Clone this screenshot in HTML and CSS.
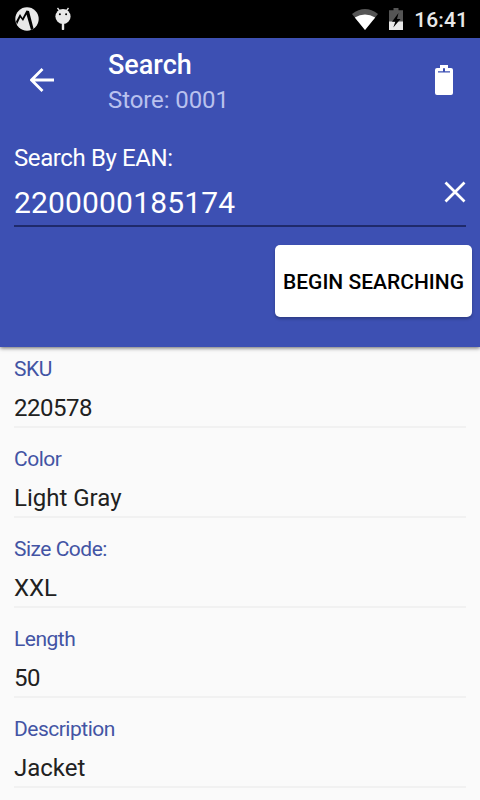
FILE: index.html
```html
<!DOCTYPE html>
<html lang="en">
<head>
  <meta charset="UTF-8" />
  <meta name="viewport" content="width=device-width, initial-scale=1" />
  <title>Search</title>
  <link rel="stylesheet" href="styles.css">
</head>
<body>
  <div class="status-bar">
    <svg class="status-app" width="24" height="24" viewBox="0 0 24 24">
      <circle cx="12" cy="12" r="11.7" fill="#e8e8e8" />
      <path d="M1 14.5L5 7L7.5 11L11.5 3.5L14 4L18.5 21.5L16 23L11.5 7.5L8 14L5.3 10.5L2 17.5z" fill="#000" />
    </svg>
    <svg class="status-debug" width="16" height="24" viewBox="0 0 16 24">
      <path d="M2.5 1l3 4M13.5 1l-3 4" stroke="#e8e8e8" stroke-width="1.3" />
      <circle cx="8" cy="9.5" r="7.6" fill="#e8e8e8" />
      <path d="M6.8 16h2.4v6.5q-1.2 1-2.4 0z" fill="#e8e8e8" />
      <circle cx="4.9" cy="7.3" r="1" fill="#000" />
      <circle cx="11.1" cy="7.3" r="1" fill="#000" />
    </svg>
    <div class="status-right">
      <svg width="26" height="21" viewBox="0 0 26 21">
        <path d="M0 5Q13-5 26 5L13 21z" fill="#555" />
        <path d="M2.8 8.5Q13 2.5 23.2 8.5L13 21z" fill="#fff" />
      </svg>
      <svg width="14" height="22" viewBox="0 0 14 22">
        <path d="M4.5 0h5v2.3H14V22H0V2.3h4.5z" fill="#555" />
        <path d="M0 13.5h14V22H0z" fill="#e8e8e8" />
        <path d="M9.5 5L3 13.8h3.3L4.3 19.5L11.5 11H8z" fill="#000" />
      </svg>
      <span class="clock">16:41</span>
    </div>
  </div>

  <header>
    <div class="toolbar">
      <svg class="back" width="24" height="24" viewBox="0 0 24 24">
        <path d="M24 12H2M12.5 1L1.5 12l11 11" fill="none" stroke="#fff" stroke-width="2.8" />
      </svg>
      <div class="titles">
        <div class="title">Search</div>
        <div class="subtitle">Store: 0001</div>
      </div>
      <svg class="clear-all" width="18" height="30" viewBox="0 0 18 30">
        <path d="M5 0h8v3h3q2 0 2 2v23q0 2-2 2H2q-2 0-2-2V5q0-2 2-2h3z" fill="#fff" />
        <path d="M3 6.2h12v1.4H3zM8 3.2h2v3H8z" fill="#3d50b3" />
      </svg>
    </div>
    <div class="search-form">
      <label class="search-label" for="ean">Search By EAN:</label>
      <div class="search-field">
        <input id="ean" type="text" value="2200000185174" />
        <svg width="22" height="22" viewBox="0 0 22 22">
          <path d="M1.5 1.5l19 19M20.5 1.5l-19 19" stroke="#fff" stroke-width="2.7" />
        </svg>
      </div>
    </div>
    <button class="search-button">Begin searching</button>
  </header>

  <main>
    <div class="row"><div class="name">SKU</div><div class="value number">220578</div></div>
    <div class="row"><div class="name">Color</div><div class="value">Light Gray</div></div>
    <div class="row"><div class="name">Size Code:</div><div class="value">XXL</div></div>
    <div class="row"><div class="name">Length</div><div class="value number">50</div></div>
    <div class="row"><div class="name">Description</div><div class="value">Jacket</div></div>
  </main>
</body>
</html>
```
FILE: styles.css
```css
* {
  box-sizing: border-box;
}
body {
  margin: 0;
  height: 800px;
  overflow: hidden;
  font-family: Roboto, sans-serif;
  background-color: #fafafa;
  color: #212121;
}
svg {
  display: block;
  flex: none;
}
.status-bar {
  display: flex;
  align-items: center;
  height: 38px;
  padding: 0 12px 0 15px;
  background-color: #000;
}
.status-debug {
  margin-left: 16px;
}
.status-right {
  display: flex;
  align-items: center;
  gap: 11px;
  margin-left: auto;
}
.clock {
  padding-top: 2px;
  font-size: 21px;
  font-weight: 500;
  line-height: 36px;
  letter-spacing: 0.1px;
  color: #e8e8e8;
}
header {
  display: flex;
  flex-direction: column;
  height: 309px;
  background-color: #3d50b3;
  color: #fff;
  box-shadow: 0 1px 4px rgb(0 0 0 / 0.6);
}
.toolbar {
  display: flex;
  align-items: center;
  height: 84px;
  padding: 0 27px 0 30px;
}
.titles {
  flex: 1;
  margin-left: 54px;
  padding-top: 4px;
}
.title {
  font-size: 27px;
  font-weight: 500;
  line-height: 36px;
}
.subtitle {
  font-size: 24px;
  line-height: 34px;
  letter-spacing: -0.1px;
  color: #b9c1ee;
}
.search-form {
  padding: 22px 14px 0;
}
.search-label {
  display: block;
  font-size: 24px;
  line-height: 28px;
  letter-spacing: -0.4px;
}
.search-field {
  display: flex;
  align-items: flex-start;
  height: 55px;
  padding-top: 9px;
  border-bottom: 2px solid #1f2a6b;
}
.search-field input {
  flex: 1;
  min-width: 0;
  height: 36px;
  margin-top: 3px;
  padding: 0;
  border: none;
  outline: none;
  background: none;
  font-family: inherit;
  font-size: 30px;
  letter-spacing: 0.16px;
  color: #fff;
}
.search-button {
  align-self: flex-end;
  width: 197px;
  height: 72px;
  margin: 18px 8px 0;
  padding: 2px 0 0;
  border: none;
  border-radius: 5px;
  background-color: #fff;
  box-shadow: 0 2px 3px rgb(0 0 0 / 0.25);
  font-family: inherit;
  font-size: 21px;
  font-weight: 500;
  text-transform: uppercase;
  white-space: nowrap;
  color: #000;
}
main {
  padding: 0 14px;
}
.row {
  height: 90px;
  padding-top: 18px;
  border-bottom: 2px solid #f1f1f1;
}
.row:first-child {
  height: 81px;
  padding-top: 9px;
}
.name {
  font-size: 21px;
  line-height: 26px;
  letter-spacing: -0.5px;
  color: #4354a4;
}
.value {
  margin-top: 12px;
  font-size: 24px;
  line-height: 28px;
}
.number {
  letter-spacing: -0.5px;
}
```
